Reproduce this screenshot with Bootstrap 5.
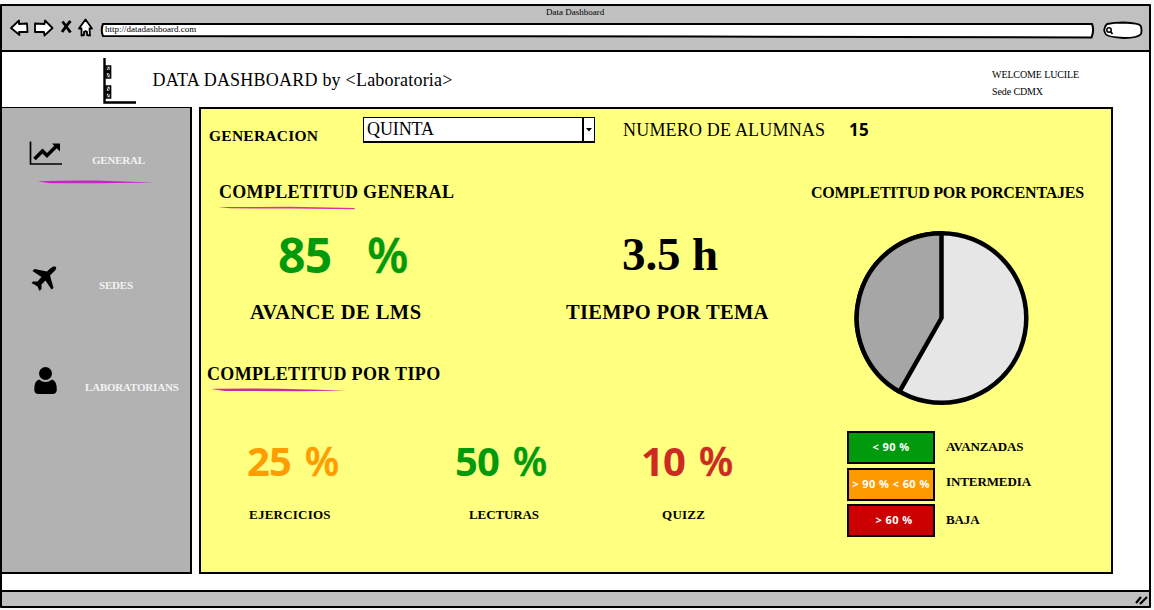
<!DOCTYPE html>
<html lang="es">
<head>
<meta charset="utf-8">
<title>Data Dashboard</title>
<link rel="stylesheet" href="https://cdn.jsdelivr.net/npm/bootstrap@5.3.0/dist/css/bootstrap.min.css">
<style>
  body { background: #f8f8f8; color: #000; font-family: "Liberation Serif", serif; overflow: hidden; }
  svg { display: block; flex: none; }
  .tx { white-space: nowrap; line-height: 20px; }
  .sans { font-family: "Open Sans", "Noto Sans", sans-serif; }
  .window { width: 1151px; height: 604px; margin-top: 4px; border: 2px solid #000; border-bottom-width: 3px; border-radius: 1px; background: #fff; }
  .chrome { height: 46px; background: #c0c0c0; border-bottom: 2px solid #000; }
  .chrome-title { font-size: 9px; line-height: 10px; padding: 1px 0 0 544px; }
  .nav-icons { margin-left: 6px; }
  .brandbar { height: 55px; padding-left: 100px; }
  .brandbar h1 { font-size: 18px; letter-spacing: .22px; margin: 18px 0 0 14.5px; }
  .welcome { font-size: 10px; letter-spacing: -.12px; margin: 14px 70px 0 0; line-height: 17px; }
  .content-row { height: 467px; }
  .side { width: 190px; background: #b2b2b2; border: solid #000; border-width: 1px 2px 2px 0; }
  .side a { color: #f2f2f2; font-weight: 700; font-size: 11px; text-decoration: none; letter-spacing: -.2px; }
  .panel { width: 914px; margin-left: 7px; background: #ffff80; border: 2px solid #000; }
  .filters { height: 42px; }
  .picker { width: 232px; height: 26px; margin: 8px 0 0 45px; border: solid #000; border-width: 1.5px 1px 2px 1.5px; background: #fff; }
  .picker-arrow { width: 12px; border-left: 2px solid #000; }
  .h18 { font-size: 18px; font-weight: 700; line-height: 24px; letter-spacing: .3px; }
  .h16 { font-size: 16px; font-weight: 700; line-height: 24px; letter-spacing: -.22px; }
  .left-col { width: 589px; }
  .big { font-size: 48px; line-height: 56px; font-weight: 700; }
  .big-label { font-size: 20.5px; line-height: 24px; font-weight: 700; margin-top: 18px; }
  .mid { font-size: 40px; line-height: 48px; font-weight: 700; letter-spacing: -.8px; padding-top: 1px; margin-bottom: -1px; }
  .pct { font-weight: 600; -webkit-text-stroke: .5px currentColor; }
  .mid .pct { margin-left: 4px; }
  .mid-label { font-size: 13px; font-weight: 700; margin-top: 21px; }
  .good { color: #009a0c; } .warn { color: #ff9c00; } .bad { color: #cc2a22; }
  .key { width: 88px; height: 33px; border: 2px solid #000; color: #fff; font: 700 11px/27px "Open Sans", sans-serif; letter-spacing: .43px; white-space: pre; }
  .key-label { font-size: 13px; font-weight: 700; letter-spacing: -.1px; margin-left: 11px; }
  .foot { height: 16px; margin-top: 16px; background: #c0c0c0; border-top: 2px solid #000; }
</style>
</head>
<body>
<div class="window d-flex flex-column">
  <header class="chrome flex-shrink-0">
    <div class="chrome-title tx">Data Dashboard</div>
    <div class="d-flex">
      <svg class="nav-icons" width="91" height="24" viewBox="8 17 91 24" fill="#fff" stroke="#000" stroke-width="1.8" stroke-linejoin="round">
        <path d="M11 28 19 20.5 19 24 27 23.5 27.5 32 19 32 19.5 35Z"/>
        <path d="M52.500 28 45 20.500 44.500 24 35 23.500 35 32 44 32 44.500 35.500Z"/>
        <path d="M62.500 21.500Q66 26 70.500 32.500M70.500 21Q66 26 62 32" fill="none" stroke-width="2.800"/>
        <path d="M85.500 19.500 79 28.500 81.500 28.500 81.500 35.500 84 35 84 32Q85.500 30.500 87 32L87 35 90 35.500 89.500 28.500 92 28.500Z"/>
      </svg>
      <div class="position-relative">
        <svg width="996" height="24" viewBox="99 17 996 24" fill="#fff" stroke="#000" stroke-width="2">
          <path d="M103 24H1092Q1094.500 30 1091.500 37.500L700 36.500 103 36Q100.500 30 103 24Z"/>
        </svg>
        <div class="tx position-absolute top-0 start-0" style="font-size:9px;margin:2px 0 0 6px">http://datadashboard.com</div>
      </div>
      <svg style="margin-left:7px" width="44" height="24" viewBox="1102 17 44 24" fill="#fff" stroke="#000" stroke-width="1.8">
        <path d="M1107 24Q1114 22.500 1123 22.500 1140 23 1141 26.500 1142 31 1141 34 1138 38 1124 38 1108 37 1106 34.500 1102 29 1107 24Z"/>
        <circle cx="1109" cy="30" r="2.200" stroke-width="1.500"/><path d="m1110.500 31.500 2 2.500"/>
      </svg>
    </div>
  </header>

  <div class="brandbar d-flex justify-content-between align-items-start flex-shrink-0">
    <div class="d-flex align-items-start">
      <svg width="36" height="48" viewBox="102 56 36 48" style="margin-top:4px">
        <path d="M104.500 58V102.500H136" fill="none" stroke="#000" stroke-width="2.400"/>
        <g fill="#ddd" stroke="#000" stroke-width="1.700"><path d="M106 66H110.500V71H106ZM106 72.500H110.500V78H106ZM106 86H110.500V91.500H106ZM106 93H110.500V98H106Z"/></g>
        <path d="m106 66 4 5m0 2-4 5m1-8 3 2m-4 14 4 5m0 2-4 5" stroke="#000" stroke-width=".9"/>
      </svg>
      <h1 class="tx fw-normal">DATA DASHBOARD by &lt;Laboratoria&gt;</h1>
    </div>
    <div class="welcome tx">WELCOME LUCILE<br>Sede CDMX</div>
  </div>

  <div class="content-row d-flex flex-shrink-0">
    <nav class="side d-flex flex-column flex-shrink-0">
      <div class="d-flex" style="padding:33px 0 0 27px">
        <svg width="34" height="26" viewBox="29 141 34 26"><path d="M30.500 141.500V164H62" fill="none" stroke="#000" stroke-width="1.700"/><path d="m34.500 159 8-8 4.500 4.500 10-10" fill="none" stroke="#000" stroke-width="3.600"/><path d="M52 143.500H60V151.500Z"/></svg>
        <a class="tx" href="#" style="margin:9px 0 0 29px">GENERAL</a>
      </div>
      <svg width="116" height="6" viewBox="38 180 116 6" style="margin:10px 0 0 36px"><path d="M38 181.500Q48 180.300 95 180.500L154 182.500 100 183.300 50 183.200Z" fill="#cb22c8"/></svg>
      <div class="d-flex" style="padding:79px 0 0 28px">
        <svg width="28" height="28" viewBox="30 265 28 28"><path d="M54 266.500Q57.500 266 55.500 270L50 275.500 53.500 288 51.500 289.500 45.500 280.500 41.500 284.500 41.500 289 39.500 291 37.500 286.500 36 285.500 31.500 283 33 281.500 37.500 281.500 41.500 277 32.500 271 34.500 269 47 271.500Q52 266.500 54 266.500Z"/></svg>
        <a class="tx" href="#" style="margin:10px 0 0 41px">SEDES</a>
      </div>
      <div class="d-flex" style="padding:71px 0 0 31px">
        <svg width="26" height="30" viewBox="33 366 26 30"><circle cx="45.500" cy="373.500" r="6.500"/><path d="M39 379.500Q45.500 384.500 52 379.500 57 381 56.800 390 56.500 394 52.500 394H38.500Q34.500 394 34.300 390 34 381 39 379.500Z"/></svg>
        <a class="tx" href="#" style="margin:11px 0 0 26px">LABORATORIANS</a>
      </div>
    </nav>

    <main class="panel flex-shrink-0">
      <div class="filters d-flex align-items-start">
        <div class="tx fw-bold" style="font-size:15.500px;letter-spacing:.25px;margin:17px 0 0 8px;width:109px">GENERACION</div>
        <div class="picker d-flex justify-content-between">
          <div class="tx" style="font-size:18px;letter-spacing:-.1px;padding:1px 0 0 3px">QUINTA</div>
          <div class="picker-arrow d-flex align-items-center justify-content-center"><svg width="6" height="4"><path d="M0 0H6L3 3.500Z"/></svg></div>
        </div>
        <div class="tx" style="font-size:18px;letter-spacing:.19px;margin:11px 0 0 28px;width:226px">NUMERO DE ALUMNAS</div>
        <div class="tx sans fw-bold" style="font-size:17px;letter-spacing:.4px;margin-top:11px">15</div>
      </div>
      <div class="d-flex">
        <section class="left-col flex-shrink-0">
          <h2 class="h18 mb-0" style="margin:29px 0 0 18px">COMPLETITUD GENERAL</h2>
          <svg width="138" height="6" viewBox="218 204 138 6" style="margin-left:17px"><path d="M218 207 290 206.800 355 208 354 209.200 290 208.600 230 208.300Z" fill="#df2fa0"/></svg>
          <div class="d-flex" style="padding:16px 0 0 49px">
            <div style="width:316px">
              <div class="big sans good d-flex" style="padding:1px 0 0 28px;margin-bottom:-1px"><span style="width:89px;letter-spacing:-.8px">85</span><span class="pct">%</span></div>
              <div class="big-label text-nowrap" style="letter-spacing:.46px">AVANCE DE LMS</div>
            </div>
            <div>
              <div class="big" style="font-size:47px;padding-left:56px;letter-spacing:-.1px">3.5 h</div>
              <div class="big-label text-nowrap" style="letter-spacing:.33px">TIEMPO POR TEMA</div>
            </div>
          </div>
          <h2 class="h18 mb-0" style="margin:38px 0 0 6px;letter-spacing:.34px">COMPLETITUD POR TIPO</h2>
          <svg width="138" height="8" viewBox="210 386 138 8" style="margin-left:9px"><path d="M211 389Q230 388.300 280 388.700L347 390.500 300 391.200 225 391Z" fill="#cf2aa0"/></svg>
          <div class="d-flex" style="padding:42px 0 0 46px">
            <div style="width:208px">
              <div class="mid sans warn text-nowrap">25 <span class="pct">%</span></div>
              <div class="mid-label tx" style="padding-left:2px;letter-spacing:.23px">EJERCICIOS</div>
            </div>
            <div style="width:187px">
              <div class="mid sans good text-nowrap">50 <span class="pct">%</span></div>
              <div class="mid-label tx" style="padding-left:14px;letter-spacing:-.1px">LECTURAS</div>
            </div>
            <div>
              <div class="mid sans bad text-nowrap" style="margin-left:-1px">10 <span class="pct">%</span></div>
              <div class="mid-label tx" style="padding-left:20px;letter-spacing:.27px">QUIZZ</div>
            </div>
          </div>
        </section>
        <section>
          <h2 class="h16 mb-0 text-nowrap" style="margin:30px 0 0 21px">COMPLETITUD POR PORCENTAJES</h2>
          <svg width="176" height="176" viewBox="-87.500 -88 176 176" style="margin:25px 0 0 64px" stroke="#000" stroke-width="4.500" stroke-linejoin="round">
            <circle r="84.800" fill="#e6e6e6"/><path d="M0 0V-84.800A84.800 84.800 0 0 0 -42 73.700Z" fill="#a6a6a6"/>
          </svg>
          <div class="d-flex flex-column" style="margin:25px 0 0 57px;gap:3.500px">
            <div class="d-flex"><div class="key text-center" style="background:#009a0c">&lt; 90 %</div><div class="key-label tx" style="margin-top:6px">AVANZADAS</div></div>
            <div class="d-flex"><div class="key text-center" style="background:#ff9900">&gt; 90 % &lt; 60 %</div><div class="key-label tx" style="margin-top:4px">INTERMEDIA</div></div>
            <div class="d-flex"><div class="key text-center" style="background:#cc0000;padding-left:6px">&gt; 60 %</div><div class="key-label tx" style="margin-top:6px">BAJA</div></div>
          </div>
        </section>
      </div>
    </main>
  </div>

  <footer class="foot d-flex justify-content-end flex-grow-1">
    <svg width="14" height="14"><path d="m1 11 5-6m-1 7 7-7" stroke="#000" stroke-width="2.200"/></svg>
  </footer>
</div>
<script src="https://cdn.jsdelivr.net/npm/bootstrap@5.3.0/dist/js/bootstrap.bundle.min.js"></script>
</body>
</html>
